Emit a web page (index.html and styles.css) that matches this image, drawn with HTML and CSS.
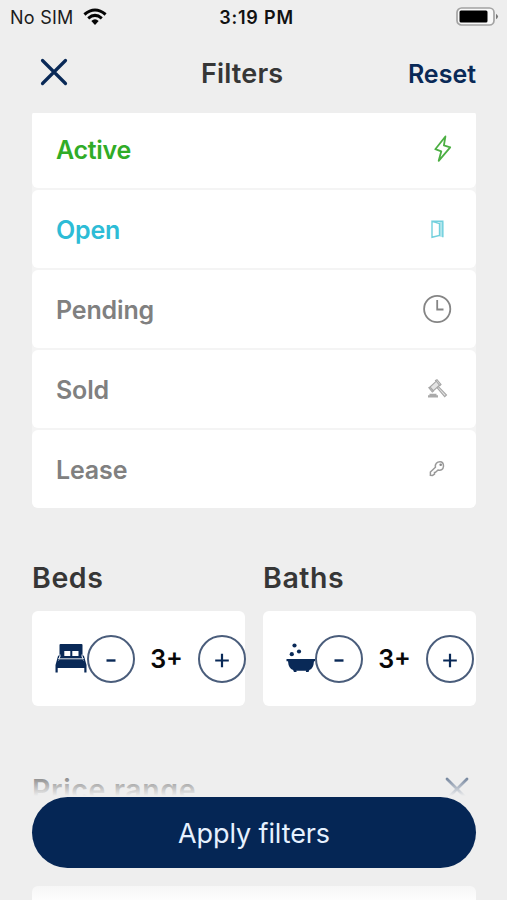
FILE: index.html
```html
<!DOCTYPE html>
<html lang="en">
<head>
<meta charset="utf-8">
<title>Filters</title>
<link rel="stylesheet" href="styles.css">
</head>
<body>
<div class="screen">
  <div class="status">
    <div class="carrier"><span>No SIM</span>
      <svg width="24" height="18" viewBox="0 0 24 18"><g fill="none" stroke="#050505" stroke-width="3"><path d="M1.4 6.5Q12 -2.5 22.6 6.5"/><path d="M5.2 10.3Q12 4.5 18.8 10.3"/></g><path d="M8.3 13Q12 9.7 15.7 13L12 17Z" fill="#050505"/></svg>
    </div>
    <div class="time">3:19 PM</div>
    <svg class="battery" width="43" height="20" viewBox="0 0 43 20"><rect x="1" y="1" width="37" height="17" rx="4.5" fill="#f8f8f8" stroke="#a3a3a3" stroke-width="1.7"/><rect x="3.5" y="3.5" width="28" height="12" rx="1.5" fill="#000"/><path d="M40 6.7Q44 9.5 40 12.3Z" fill="#777"/></svg>
  </div>
  <header class="header">
    <svg class="close" width="28" height="28" viewBox="0 0 28 28"><path d="M2.5 2.5L25.5 25.5M25.5 2.5L2.5 25.5" fill="none" stroke="#092957" stroke-width="3.2" stroke-linecap="round"/></svg>
    <h1>Filters</h1>
    <span class="reset">Reset</span>
  </header>
  <main class="content">
    <div class="list">
      <div class="row active"><span>Active</span>
        <svg width="76" height="28" viewBox="0 0 76 28"><path d="M45.4 1.5L35.3 14.2L41.3 16.3L38.7 25.8L50.2 12.3L43.9 10.4Z" fill="none" stroke="#4caf43" stroke-width="1.8" stroke-linejoin="round"/></svg></div>
      <div class="row open"><span>Open</span>
        <svg width="76" height="28" viewBox="0 0 76 28"><path d="M39.5 6.5L43.3 7.2V22.3L39.5 21.5Z" fill="#b1e6ed"/><path d="M32 6.3L39.5 8.5V20.5L32 22.3ZM32 6.3H42.8V22.3" fill="none" stroke="#72d0dd" stroke-width="1.4"/></svg></div>
      <div class="row"><span>Pending</span>
        <svg width="76" height="28" viewBox="0 0 76 28"><circle cx="37.2" cy="14" r="13.1" fill="none" stroke="#858585" stroke-width="1.8"/><path d="M37.2 5V14.5H43.5" fill="none" stroke="#858585" stroke-width="1.8"/></svg></div>
      <div class="row"><span>Sold</span>
        <svg width="76" height="28" viewBox="0 0 76 28"><g fill="#e4e4e4" stroke="#a6a6a6" stroke-width="1.1"><path d="M30 12L36.3 6.2L39.5 10.2L33.2 16ZM35 5.7L37 4.7L41 9.5L39.5 11M28.8 12.7L30 12L33.6 16L32.3 17ZM37 12.7L44.7 21.7L46.5 20L38.5 11.7Z"/></g><path d="M29.5 18.8H36.5V20.3H38V22.5H28V20.3H29.5Z" fill="#aaa"/></svg></div>
      <div class="row"><span>Lease</span>
        <svg width="76" height="28" viewBox="0 0 76 28"><path d="M30.4 20.3V17L35.4 12.2C34.8 9 37 6.8 40 6.8C42.3 6.8 43.5 8.7 43.5 11.2C43.2 14.4 41 16 38 15L35.5 17.4L34.5 17.5V19.2L32.5 20.5Z" fill="none" stroke="#999" stroke-width="1.5"/><circle cx="40.7" cy="9.8" r="1.3" fill="#888"/></svg></div>
    </div>
    <div class="counts">
      <section><h2>Beds</h2>
        <div class="card">
          <svg width="32" height="32" viewBox="0 0 32 32"><path d="M4.5 2Q4.5 1 5.5 1H26.5Q27.5 1 27.5 2V13H4.5ZM.5 22L3 13L4.5 12V14L3.5 18H28.5L27.5 14V12L29 13L31.5 22V29.5H29.3V25H2.7V29.5H.5Z" fill="#092957"/><path d="M5 13H27L28.5 19.5H3.5Z" fill="#092957"/><path d="M9.3 8H15.3V13H9.3ZM17.3 8H23.5V13H17.3Z" fill="#fff"/><path d="M5 11.5V14L3.5 15.8H28.5L27 14V11.5" fill="none" stroke="#fff" stroke-width=".9"/></svg>
          <span class="button"><svg width="24" height="24" viewBox="0 0 24 24"><path d="M7.5 13.5H16.5" stroke="#092957" stroke-width="2.4"/></svg></span>
          <span class="value">3+</span>
          <span class="button"><svg width="24" height="24" viewBox="0 0 24 24"><path d="M5.2 13.5H18.8M12 6.7V20.3" stroke="#092957" stroke-width="2.2"/></svg></span>
        </div>
      </section>
      <section><h2>Baths</h2>
        <div class="card">
          <svg class="tub" width="29" height="32" viewBox="0 0 29 32"><g fill="#092957"><circle cx="8.5" cy="2.5" r="2.1"/><circle cx="13" cy="8.5" r="2.1"/><circle cx="5.8" cy="11.2" r="2.1"/><path d="M.5 16H29.5V18.2H28Q27.5 25.5 23.4 27L22.5 29H19.8L20.2 27.8H10.3L10.7 29H8L7.1 27Q2.5 25.5 2 18.2H.5Z"/></g></svg>
          <span class="button"><svg width="24" height="24" viewBox="0 0 24 24"><path d="M7.5 13.5H16.5" stroke="#092957" stroke-width="2.4"/></svg></span>
          <span class="value">3+</span>
          <span class="button"><svg width="24" height="24" viewBox="0 0 24 24"><path d="M5.2 13.5H18.8M12 6.7V20.3" stroke="#092957" stroke-width="2.2"/></svg></span>
        </div>
      </section>
    </div>
    <div class="price"><h2>Price range</h2><svg width="24" height="24" viewBox="0 0 24 24"><path d="M2 2L22 22M22 2L2 22" fill="none" stroke="#092957" stroke-width="2.8" stroke-linecap="round"/></svg></div>
    <div class="next-card"></div>
  </main>
  <div class="footer"><div class="apply">Apply filters</div></div>
</div>
</body>
</html>
```

FILE: styles.css
```css
* { box-sizing: border-box; }
body { margin: 0; background: #eee; font-family: Inter, sans-serif; }
.screen { position: relative; width: 507px; height: 900px; overflow: hidden; background: #eee; display: flex; flex-direction: column; }
svg { display: block; flex: none; }
.status { height: 34px; display: grid; grid-template-columns: 1fr auto 1fr; align-items: center; padding: 0 8px 0 10px; font-size: 18px; color: #1c1c1c; }
.carrier { display: flex; gap: 9px; align-items: center; letter-spacing: .25px; }
.time { font-weight: 600; color: #111; letter-spacing: .8px; padding-left: 4px; }
.battery { justify-self: end; }
.header { height: 79px; display: grid; grid-template-columns: 161px 1fr auto; align-items: center; padding: 0 31px 0 40px; }
.close { margin-top: -4px; }
h1, h2 { margin: 0; font-weight: 600; color: #363636; }
h1 { font-size: 27px; line-height: 32px; letter-spacing: .15px; padding-top: 1px; }
.reset { font-size: 25px; font-weight: 600; color: #092957; letter-spacing: 0; }
.content { height: 787px; overflow: hidden; padding: 0 31px 0 32px; flex: none; }
.list { display: grid; gap: 2px; margin-top: -3px; background: #f4f4f4; border-radius: 6px; }
.row { height: 78px; background: #fff; border-radius: 6px; padding: 0 0 0 24px; display: flex; align-items: center; justify-content: space-between; font-size: 25px; font-weight: 600; color: #808080; letter-spacing: -.15px; }
.row span { padding-top: 2px; }
.active { color: #30ac27; letter-spacing: -.3px; }
.open { color: #2dbcd6; letter-spacing: -.2px; }
.counts { display: grid; grid-template-columns: 213px 213px; column-gap: 18px; margin-top: 53px; }
h2 { font-size: 28.5px; line-height: 34px; letter-spacing: .6px; }
.card { height: 95px; margin-top: 16px; border-radius: 6px; background: #fff; display: flex; align-items: center; padding-left: 23px; }
.button { width: 48px; height: 48px; border: 2px solid #4a5d7b; border-radius: 50%; display: flex; align-items: center; justify-content: center; flex: none; }
.value { width: 63px; text-align: center; flex: none; font-size: 25px; font-weight: 600; color: #080808; }
.price { display: flex; justify-content: space-between; margin-top: 67px; padding-right: 7px; }
.price svg { margin-top: 4px; }
.next-card { height: 80px; margin-top: 79px; background: #fff; border-radius: 6px; }
.footer { position: absolute; inset: 765px 0 0; padding: 32px 31px 0 32px; background: linear-gradient(to bottom, rgba(238,238,238,0), rgba(238,238,238,.5) 14px, #eee 31px, #eee 105px, rgba(238,238,238,0) 138px); }
.apply { height: 71px; border-radius: 36px; background: #052655; color: #e6f1ff; display: flex; align-items: center; justify-content: center; font-size: 27px; padding-top: 2px; letter-spacing: -.1px; }
```
